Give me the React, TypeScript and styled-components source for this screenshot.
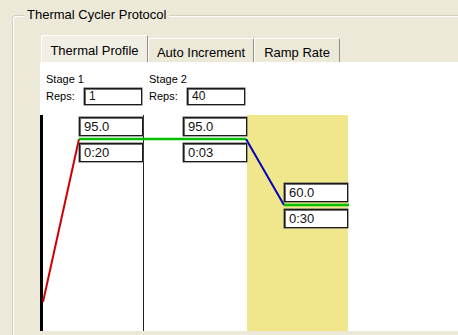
import React from "react";
import styled, { createGlobalStyle } from "styled-components";

const Global = createGlobalStyle`
  html, body { margin: 0; padding: 0; background: #ECE9D8; }
  body {
    width: 458px; height: 335px; overflow: hidden;
    font-family: "Liberation Sans", Arial, sans-serif; color: #000;
  }
`;

const Screen = styled.div`
  width: 458px;
  height: 335px;
  overflow: hidden;
  box-sizing: border-box;
  padding: 15px 0 0 12px;
`;

const GroupBox = styled.div`
  position: relative;
  width: 480px;
  height: 340px;
  box-sizing: border-box;
  border: 1px solid #D0D0BF;
  border-radius: 3px 0 0 0;
  box-shadow: inset 1px 1px 0 #fff;
  padding: 19px 0 0 27px;
`;

const Legend = styled.div`
  position: absolute;
  top: -9px;
  left: 11px;
  padding: 0 3px;
  background: #ECE9D8;
  font-size: 13px;
  line-height: 15px;
`;

const TabStrip = styled.div`
  display: flex;
  align-items: flex-end;
  height: 27px;
  margin-left: 1px;
`;

const Tab = styled.div<{ $w: number; $active?: boolean }>`
  box-sizing: border-box;
  width: ${(p) => p.$w}px;
  height: ${(p) => (p.$active ? 27 : 24)}px;
  padding-top: ${(p) => (p.$active ? 7 : 6)}px;
  text-align: center;
  font-size: 13px;
  line-height: 15px;
  background: ${(p) => (p.$active ? "#F1EFE4" : "#ECE9D8")};
  border-top: 1px solid #fff;
  border-left: 1px solid #fff;
  border-right: 1px solid #8E8E84;
  border-radius: 2px 2px 0 0;
  white-space: nowrap;
`;

const Panel = styled.div`
  background: #fff;
  height: 269px;
  width: 100%;
`;

const Header = styled.div`
  display: flex;
  height: 53px;
`;

const StageHead = styled.div<{ $w: number }>`
  box-sizing: border-box;
  width: ${(p) => p.$w}px;
  padding: 11px 0 0 6px;
  display: flex;
  flex-direction: column;
  gap: 2px;
`;

const SmallLabel = styled.div`
  font-size: 11px;
  line-height: 13px;
`;

const RepsRow = styled.div`
  display: flex;
  align-items: center;
`;

const RepsLabel = styled(SmallLabel)`
  width: 38px;
`;

const Field = styled.div<{ $w: number; $h: number; $size: number }>`
  position: relative;
  z-index: 1;
  box-sizing: border-box;
  width: ${(p) => p.$w}px;
  height: ${(p) => p.$h}px;
  background: #fff;
  border: 1px solid #1a1a1a;
  box-shadow: inset 1px 1px 0 #6d6d6d, 0 0 0 0.5px #555;
  padding: 0 0 0 4px;
  font-size: ${(p) => p.$size}px;
  line-height: ${(p) => p.$h - 2}px;
  color: #111;
`;

const Chart = styled.div`
  position: relative;
  display: flex;
  height: 216px;
`;

const Column = styled.div<{ $w: number; $fill?: string; $first?: boolean; $divider?: boolean }>`
  box-sizing: border-box;
  width: ${(p) => p.$w}px;
  height: 100%;
  background: ${(p) => p.$fill || "transparent"};
  border-left: ${(p) => (p.$first ? "3px solid #000" : "none")};
  border-right: ${(p) => (p.$divider ? "1px solid #222" : "none")};
  display: flex;
  flex-direction: column;
  align-items: flex-end;
`;

const StepGroup = styled.div`
  display: flex;
  flex-direction: column;
  gap: 7px;
`;

const Plot = styled.svg`
  position: absolute;
  left: 0;
  top: 0;
  width: 100%;
  height: 100%;
  pointer-events: none;
`;

type Step = { temp: string; time: string; y: number };

const stages = [
  { label: "Stage 1", reps: "1", w: 103 },
  { label: "Stage 2", reps: "40", w: 103 },
];

const columns: { w: number; fill?: string; first?: boolean; divider?: boolean; step: Step }[] = [
  { w: 104, first: true, divider: true, step: { temp: "95.0", time: "0:20", y: 24 } },
  { w: 103, step: { temp: "95.0", time: "0:03", y: 24 } },
  { w: 101, fill: "#F0E68C", step: { temp: "60.0", time: "0:30", y: 90 } },
];

export default function App() {
  return (
    <>
      <Global />
      <Screen>
        <GroupBox>
          <Legend>Thermal Cycler Protocol</Legend>
          <TabStrip>
            <Tab $w={107} $active>Thermal Profile</Tab>
            <Tab $w={106}>Auto Increment</Tab>
            <Tab $w={86}>Ramp Rate</Tab>
          </TabStrip>
          <Panel>
            <Header>
              {stages.map((s) => (
                <StageHead key={s.label} $w={s.w}>
                  <SmallLabel>{s.label}</SmallLabel>
                  <RepsRow>
                    <RepsLabel>Reps:</RepsLabel>
                    <Field $w={58} $h={17} $size={12}>{s.reps}</Field>
                  </RepsRow>
                </StageHead>
              ))}
            </Header>
            <Chart>
              {columns.map((c, i) => (
                <Column key={i} $w={c.w} $fill={c.fill} $first={c.first} $divider={c.divider}>
                  <StepGroup style={{ marginTop: c.step.y - 22 }}>
                    <Field $w={64} $h={19} $size={13}>{c.step.temp}</Field>
                    <Field $w={64} $h={19} $size={13}>{c.step.time}</Field>
                  </StepGroup>
                </Column>
              ))}
              <Plot viewBox="0 0 418 216" preserveAspectRatio="xMinYMin meet" width={418} height={216}>
                <line x1={3} y1={187} x2={39} y2={24} stroke="#CC0000" strokeWidth={2} />
                <line x1={39} y1={24} x2={206} y2={24} stroke="#00C000" strokeWidth={2.5} />
                <line x1={206} y1={24} x2={244} y2={90} stroke="#0000BB" strokeWidth={2} />
                <line x1={244} y1={90} x2={309} y2={90} stroke="#00C000" strokeWidth={2.5} />
              </Plot>
            </Chart>
          </Panel>
        </GroupBox>
      </Screen>
    </>
  );
}
